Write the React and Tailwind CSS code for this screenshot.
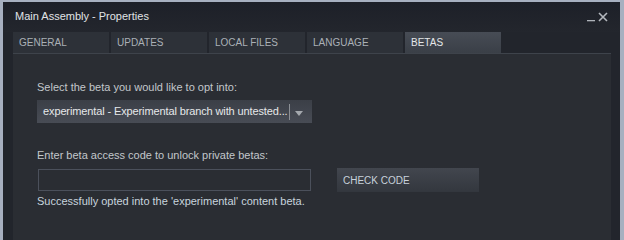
export default function App() {
  const font = { fontFamily: '"Liberation Sans", Arial, sans-serif' };
  const tabs = ["GENERAL", "UPDATES", "LOCAL FILES", "LANGUAGE", "BETAS"];
  return (
    <div
      className="w-[624px] h-[240px] overflow-hidden bg-[#a7b0c0] pt-[2px] pl-[3px] pr-[4px]"
      style={font}
    >
      <div className="h-full bg-[#22252c] flex flex-col">
        {/* title bar */}
        <div className="h-[30px] flex items-center justify-between pl-[12px] pr-[12px] bg-gradient-to-b from-[#1d2028] to-[#23262d]">
          <span className="text-[11px] leading-[13px] text-[#e0e3e6] mt-[-1px]">
            Main Assembly - Properties
          </span>
          <div className="flex items-end gap-[3px] mt-[-2px]">
            <svg width="8" height="12" viewBox="0 0 8 12">
              <rect x="0" y="10" width="8" height="1.3" fill="#aeb3b9" />
            </svg>
            <svg width="10" height="10" viewBox="0 0 10 10">
              <path d="M1 1 L9 9 M9 1 L1 9" stroke="#b4b8be" strokeWidth="1.6" />
            </svg>
          </div>
        </div>
        {/* tabs */}
        <div className="ml-[10px] mr-[9px] flex gap-[2px]">
          {tabs.map((t) => (
            <div
              key={t}
              className={
                t === "BETAS"
                  ? "w-[96px] h-[21px] flex items-center pl-[6px] text-[10px] text-[#e4e6e8] bg-gradient-to-b from-[#474c55] to-[#3a3f47]"
                  : "w-[96px] h-[21px] flex items-center pl-[6px] text-[10px] text-[#aab0b6] bg-[#2d3138]"
              }
            >
              {t}
            </div>
          ))}
        </div>
        <div className="ml-[10px] mr-[9px] h-[1px] bg-[#3e434b]" />
        {/* body */}
        <div className="ml-[10px] mr-[9px] flex-1 bg-[#2a2d33] pl-[24px] pt-[27px]">
          <div className="text-[11px] leading-[13px] text-[#c3c7cb]">
            Select the beta you would like to opt into:
          </div>
          <div className="mt-[6px] w-[275px] h-[23px] flex items-center bg-gradient-to-b from-[#3b3f47] to-[#484c55]">
            <span className="flex-none pl-[6px] text-[11px] leading-[13px] tracking-[-0.12px] text-[#e6e8ea] whitespace-nowrap">
              experimental - Experimental branch with untested...
            </span>
            <div className="flex-none ml-[1px] w-[1px] h-[16px] bg-[#8c9096]" />
            <svg className="flex-none ml-[5px] mt-[3px]" width="8" height="5" viewBox="0 0 8 5">
              <path d="M0 0 L8 0 L4 5 Z" fill="#a4a8ad" />
            </svg>
          </div>
          <div className="mt-[26px] text-[11px] leading-[13px] text-[#c3c7cb]">
            Enter beta access code to unlock private betas:
          </div>
          <div className="mt-[6px] flex items-center">
            <div className="ml-[1px] w-[273px] h-[22px] border border-[#4b505b] bg-[#2a2d33]" />
            <div className="ml-[26px] w-[142px] h-[24px] flex items-center pl-[6px] text-[10px] text-[#c8d2dc] bg-gradient-to-b from-[#42464e] to-[#33373e]">
              CHECK CODE
            </div>
          </div>
          <div className="mt-[3px] text-[11px] leading-[13px] text-[#c8d4de]">
            Successfully opted into the 'experimental' content beta.
          </div>
        </div>
      </div>
    </div>
  );
}
